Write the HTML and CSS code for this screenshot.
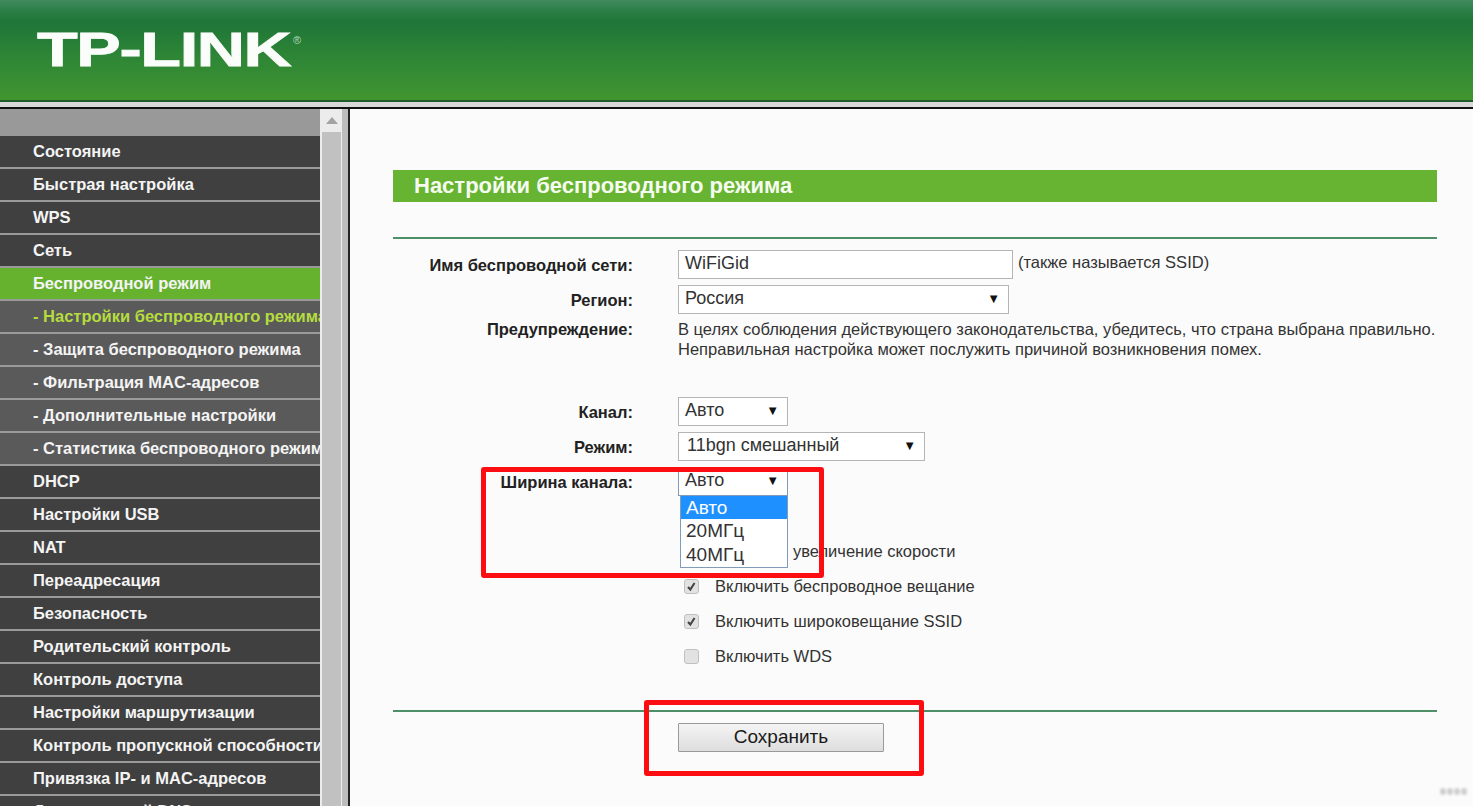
FILE: index.html
```html
<!DOCTYPE html>
<html lang="ru">
<head>
<meta charset="utf-8">
<title>TP-LINK</title>
<link rel="stylesheet" href="styles.css">
</head>
<body>
<header class="top">
  <div class="logo"><span class="logo-text">TP-LINK</span><span class="logo-reg">®</span></div>
</header>
<div class="strip"></div>
<div class="main">
  <nav class="side">
    <div class="side-head"></div>
    <a class="item">Состояние</a>
    <a class="item">Быстрая настройка</a>
    <a class="item">WPS</a>
    <a class="item">Сеть</a>
    <a class="item active">Беспроводной режим</a>
    <a class="item sub current">- Настройки беспроводного режима</a>
    <a class="item sub">- Защита беспроводного режима</a>
    <a class="item sub">- Фильтрация MAC-адресов</a>
    <a class="item sub">- Дополнительные настройки</a>
    <a class="item sub">- Статистика беспроводного режима</a>
    <a class="item">DHCP</a>
    <a class="item">Настройки USB</a>
    <a class="item">NAT</a>
    <a class="item">Переадресация</a>
    <a class="item">Безопасность</a>
    <a class="item">Родительский контроль</a>
    <a class="item">Контроль доступа</a>
    <a class="item">Настройки маршрутизации</a>
    <a class="item">Контроль пропускной способности</a>
    <a class="item">Привязка IP- и MAC-адресов</a>
    <a class="item">Динамический DNS</a>
  </nav>
  <div class="scroll">
    <svg class="scroll-arrow" width="12" height="7" viewBox="0 0 12 7"><path d="M6 0L12 7H0Z" fill="#a3a3a3"/></svg>
    <div class="scroll-thumb"></div>
  </div>
  <div class="divider"></div>
  <main class="content">
    <h1 class="title">Настройки беспроводного режима</h1>
    <div class="rule rule-top"></div>
    <div class="row row-name">
      <label class="lab lab-low">Имя беспроводной сети:</label>
      <input class="field" type="text" value="WiFiGid">
      <span class="note">(также называется SSID)</span>
    </div>
    <div class="row row-region">
      <label class="lab lab-low">Регион:</label>
      <div class="sel sel-region"><span>Россия</span><i class="caret">▼</i></div>
    </div>
    <div class="row row-warn">
      <label class="lab">Предупреждение:</label>
      <p class="warn">В целях соблюдения действующего законодательства, убедитесь, что страна выбрана правильно.<br>Неправильная настройка может послужить причиной возникновения помех.</p>
    </div>
    <div class="row row-channel">
      <label class="lab lab-low">Канал:</label>
      <div class="sel sel-short"><span>Авто</span><i class="caret">▼</i></div>
    </div>
    <div class="row row-mode">
      <label class="lab lab-low">Режим:</label>
      <div class="sel sel-mode"><span>11bgn смешанный</span><i class="caret">▼</i></div>
    </div>
    <div class="row row-width">
      <label class="lab lab-low">Ширина канала:</label>
      <div class="sel sel-short sel-open"><span>Авто</span><i class="caret">▼</i>
        <ul class="drop">
          <li class="opt opt-on">Авто</li>
          <li class="opt">20МГц</li>
          <li class="opt">40МГц</li>
        </ul>
      </div>
    </div>
    <div class="checks">
      <div class="check check-covered"><span>увеличение скорости</span></div>
      <div class="check"><span class="box"><svg viewBox="0 0 15 15" width="15" height="15"><path d="M3.5 8L6.2 11L11 3.5" fill="none" stroke="#444" stroke-width="2.4"/></svg></span><span>Включить беспроводное вещание</span></div>
      <div class="check"><span class="box"><svg viewBox="0 0 15 15" width="15" height="15"><path d="M3.5 8L6.2 11L11 3.5" fill="none" stroke="#444" stroke-width="2.4"/></svg></span><span>Включить широковещание SSID</span></div>
      <div class="check"><span class="box"></span><span>Включить WDS</span></div>
    </div>
    <div class="rule rule-bottom"></div>
    <div class="row row-save">
      <span class="lab"></span>
      <button class="save" type="button">Сохранить</button>
    </div>
  </main>
</div>
<div class="mark mark-width"></div>
<div class="mark mark-save"></div>
<div class="wm"><b></b><b></b><b></b><b></b></div>
</body>
</html>
```

FILE: styles.css
```css
* { box-sizing: border-box; }
html, body { margin: 0; padding: 0; height: 806px; overflow: hidden; }
body { font-family: "Liberation Sans", Arial, sans-serif; font-size: 16.5px; color: #222; background: #fbfbfb; position: relative; }

.top { height: 102px; border-bottom: 2px solid #1f5a2c; background: linear-gradient(180deg, #42895f 0, #2c8048 10px, #1e7538 22px, #2d8536 55px, #41952f 100px); padding: 20px 0 0 37px; }
.logo { display: flex; align-items: flex-start; height: 60px; }
.logo-text { display: block; font-size: 48px; line-height: 60px; font-weight: 700; letter-spacing: -1px; color: #fbfdfa; -webkit-text-stroke: 0.8px #fbfdfa; transform: scaleX(1.39); transform-origin: left top; width: 256px; white-space: nowrap; }
.logo-reg { font-size: 11px; line-height: 13px; margin-top: 14px; color: #b5d6b8; }

.strip { height: 7px; background: #d8d8d8; border-bottom: 2px solid #111; }

.main { display: flex; height: 697px; overflow: hidden; }
.side { width: 320px; flex: none; background: #444; overflow: hidden; }
.side-head { height: 27px; background: #999; }
.item { display: block; height: 33px; line-height: 31px; padding-left: 33px; background: #404040; border-bottom: 2px solid #9a9a9a; color: #f4f4f4; font-weight: 700; font-size: 16.5px; white-space: nowrap; overflow: hidden; }
.item.active { background: #66b22f; }
.item.sub { background: #5a5a5a; }
.item.current { color: #b5dc3f; }

.scroll { width: 22px; flex: none; background: #ececec; padding: 8px 1px 0 2px; display: flex; flex-direction: column; align-items: center; }
.scroll-arrow { flex: none; }
.scroll-thumb { width: 19px; height: 690px; margin-top: 8px; background: #c1c1c1; flex: none; }
.divider { width: 8px; flex: none; background: #bdbdbd; border-right: 2px solid #222; }

.content { flex: 1; padding: 61px 36px 0 43px; background: #fbfbfb; }
.title { margin: 0; height: 32px; background: #66b431; color: #f6fbf0; font-size: 22px; line-height: 31px; font-weight: 700; padding-left: 21px; }
.rule { height: 2px; background: #4f8f68; }
.rule-top { margin-top: 35px; }
.rule-bottom { margin-top: 36px; }

.row { display: flex; align-items: flex-start; }
.lab { width: 240px; margin-right: 45px; flex: none; text-align: right; font-weight: 700; font-size: 16.5px; line-height: 29px; color: #222; }
.lab-low { height: 29px; line-height: 31px; }
.row-name { margin-top: 11px; }
.row-region { margin-top: 6px; }
.row-warn { margin-top: 8px; }
.row-warn .lab { line-height: 14px; }
.row-channel { margin-top: 38px; }
.row-mode { margin-top: 6px; }
.row-width { margin-top: 6px; }
.row-save { margin-top: 11px; }

.field { width: 335px; height: 29px; border: 1px solid #b5b5b5; background: #fff; padding: 0 6px 2px; font: 18px "Liberation Sans", Arial, sans-serif; color: #333; outline: none; }
.note { margin-left: 5px; line-height: 25px; color: #333; }
.warn { margin: -3px 0 0; font-size: 16.5px; line-height: 20px; color: #333; white-space: nowrap; }

.sel { position: relative; height: 29px; border: 1px solid #b5b5b5; background: #fff; padding: 0 6px; font-size: 18px; line-height: 25px; color: #333; display: flex; justify-content: space-between; }
.sel-region { width: 331px; }
.sel-short { width: 110px; }
.sel-mode { width: 247px; padding-left: 8px; }
.sel-open { border-color: #7f9db9; }
.caret { font-style: normal; font-size: 13px; line-height: 26px; color: #111; margin-right: 2px; }

.drop { position: absolute; left: 1px; top: 28px; width: 108px; margin: 0; padding: 0; list-style: none; background: #fff; border: 1px solid #7f9db9; border-top: 0; z-index: 2; }
.opt { height: 24px; line-height: 23px; padding-left: 5px; font-size: 19px; color: #333; }
.opt-on { height: 23px; background: #1e90ff; color: #fff; }

.checks { margin-left: 285px; margin-top: 38px; }
.check { display: flex; align-items: center; height: 35px; color: #333; font-size: 16.5px; padding-left: 6px; }
.check-covered { padding-left: 115px; }
.box { width: 15px; height: 15px; border: 1px solid #c0c0c0; border-radius: 3px; background: #e2e2e2; margin-right: 16px; flex: none; display: flex; justify-content: center; align-items: center; }

.save { width: 206px; height: 29px; padding: 0 0 2px; border: 1px solid #9a9a9a; border-radius: 1px; background: linear-gradient(180deg, #f4f4f4, #dedede); font: 19px "Liberation Sans", Arial, sans-serif; color: #1a1a1a; }

.mark { position: absolute; border: 5px solid #fb0d12; border-radius: 3px; z-index: 3; pointer-events: none; }
.mark-width { left: 481px; top: 467px; width: 343px; height: 111px; }
.mark-save { left: 644px; top: 700px; width: 280px; height: 76px; }

.wm { position: absolute; left: 1440px; top: 788px; display: flex; gap: 1px; filter: blur(1px); }
.wm b { width: 6px; height: 7px; border-radius: 50%; background: #cfcfcf; }
```
